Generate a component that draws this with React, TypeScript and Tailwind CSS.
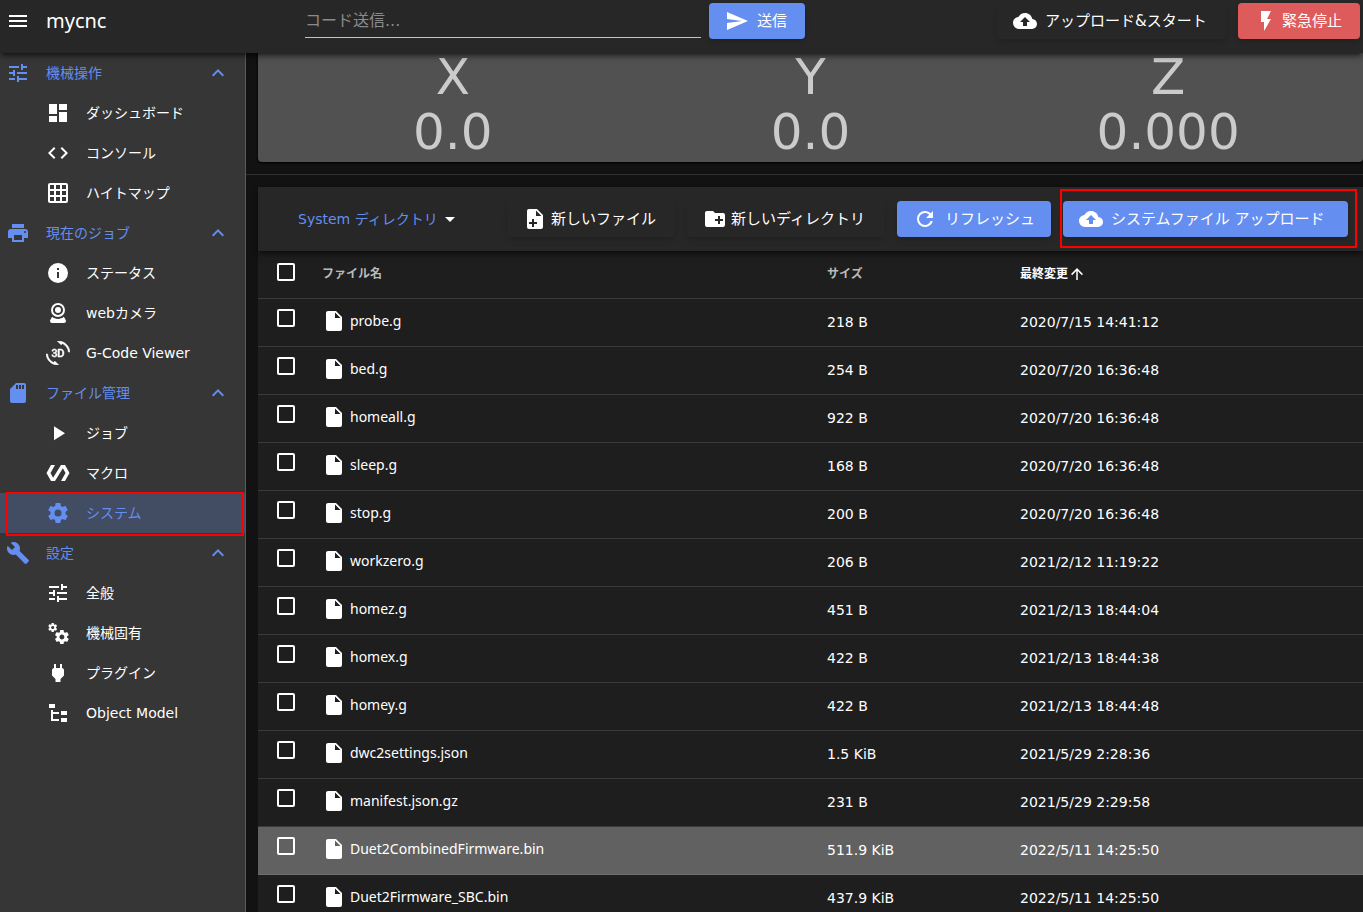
import { useState } from 'react';
import { Md3dRotation } from 'react-icons/md';
import clsx from 'clsx';

const icons = {
  menu: 'M3,6H21V8H3V6M3,11H21V13H3V11M3,16H21V18H3V16Z',
  send: 'M2,21L23,12L2,3V10L17,12L2,14V21Z',
  cloudUpload:
    'M14,13V17H10V13H7L12,8L17,13M19.35,10.03C18.67,6.59 15.64,4 12,4C9.11,4 6.6,5.64 5.35,8.03C2.34,8.36 0,10.9 0,14A6,6 0 0,0 6,20H19A5,5 0 0,0 24,15C24,12.36 21.95,10.22 19.35,10.03Z',
  flash: 'M7,2V13H10V22L17,10H13L17,2H7Z',
  tune: 'M3,17V19H9V17H3M3,5V7H13V5H3M13,21V19H21V17H13V15H11V21H13M7,9V11H3V13H7V15H9V9H7M21,13V11H11V13H21M15,9H17V7H21V5H17V3H15V9Z',
  dashboard: 'M13,3V9H21V3M13,21H21V11H13M3,21H11V15H3M3,13H11V3H3V13Z',
  code: 'M14.6,16.6L19.2,12L14.6,7.4L16,6L22,12L16,18L14.6,16.6M9.4,16.6L4.8,12L9.4,7.4L8,6L2,12L8,18L9.4,16.6Z',
  grid: 'M10,4V8H14V4H10M16,4V8H20V4H16M16,10V14H20V10H16M16,16V20H20V16H16M14,20V16H10V20H14M8,20V16H4V20H8M8,14V10H4V14H8M8,8V4H4V8H8M10,14H14V10H10V14M4,2H20A2,2 0 0,1 22,4V20A2,2 0 0,1 20,22H4C2.92,22 2,21.1 2,20V4A2,2 0 0,1 4,2Z',
  printer:
    'M18,3H6V7H18M19,12A1,1 0 0,1 18,11A1,1 0 0,1 19,10A1,1 0 0,1 20,11A1,1 0 0,1 19,12M16,19H8V14H16M19,8H5A3,3 0 0,0 2,11V17H6V21H18V17H22V11A3,3 0 0,0 19,8Z',
  info: 'M13,9H11V7H13M13,17H11V11H13M12,2A10,10 0 0,0 2,12A10,10 0 0,0 12,22A10,10 0 0,0 22,12A10,10 0 0,0 12,2Z',
  webcam:
    'M12,2A7,7 0 0,1 19,9A7,7 0 0,1 12,16A7,7 0 0,1 5,9A7,7 0 0,1 12,2M12,4A5,5 0 0,0 7,9A5,5 0 0,0 12,14A5,5 0 0,0 17,9A5,5 0 0,0 12,4M12,6A3,3 0 0,1 15,9A3,3 0 0,1 12,12A3,3 0 0,1 9,9A3,3 0 0,1 12,6M6,22A2,2 0 0,1 4,20C4,19.62 4.1,19.27 4.29,18.97L6.11,15.81C7.69,17.17 9.75,18 12,18C14.25,18 16.31,17.17 17.89,15.81L19.71,18.97C19.9,19.27 20,19.62 20,20A2,2 0 0,1 18,22H6Z',
  sdCard: 'M18,8H16V4H18M15,8H13V4H15M12,8H10V4H12M18,2H10L4,8V20A2,2 0 0,0 6,22H18A2,2 0 0,0 20,20V4A2,2 0 0,0 18,2Z',
  play: 'M8,5.14V19.14L19,12.14L8,5.14Z',
  polymer: 'M19,4H15L7.1,16.63L4.5,12L9,4H5L0.5,12L5,20H9L16.89,7.37L19.5,12L15,20H19L23.5,12L19,4Z',
  cog: 'M12,15.5A3.5,3.5 0 0,1 8.5,12A3.5,3.5 0 0,1 12,8.5A3.5,3.5 0 0,1 15.5,12A3.5,3.5 0 0,1 12,15.5M19.43,12.97C19.47,12.65 19.5,12.33 19.5,12C19.5,11.67 19.47,11.34 19.43,11L21.54,9.37C21.73,9.22 21.78,8.95 21.66,8.73L19.66,5.27C19.54,5.05 19.27,4.96 19.05,5.05L16.56,6.05C16.04,5.66 15.5,5.32 14.87,5.07L14.5,2.42C14.46,2.18 14.25,2 14,2H10C9.75,2 9.54,2.18 9.5,2.42L9.13,5.07C8.5,5.32 7.96,5.66 7.44,6.05L4.95,5.05C4.73,4.96 4.46,5.05 4.34,5.27L2.34,8.73C2.21,8.95 2.27,9.22 2.46,9.37L4.57,11C4.53,11.34 4.5,11.67 4.5,12C4.5,12.33 4.53,12.65 4.57,12.97L2.46,14.63C2.27,14.78 2.21,15.05 2.34,15.27L4.34,18.73C4.46,18.95 4.73,19.03 4.95,18.95L7.44,17.94C7.96,18.34 8.5,18.68 9.13,18.93L9.5,21.58C9.54,21.82 9.75,22 10,22H14C14.25,22 14.46,21.82 14.5,21.58L14.87,18.93C15.5,18.67 16.04,18.34 16.56,17.94L19.05,18.95C19.27,19.03 19.54,18.95 19.66,18.73L21.66,15.27C21.78,15.05 21.73,14.78 21.54,14.63L19.43,12.97Z',
  wrench:
    'M22.7,19L13.6,9.9C14.5,7.6 14,4.9 12.1,3C10.1,1 7.1,0.6 4.7,1.7L9,6L6,9L1.6,4.7C0.4,7.1 0.9,10.1 2.9,12.1C4.8,14 7.5,14.5 9.8,13.6L18.9,22.7C19.3,23.1 19.9,23.1 20.3,22.7L22.6,20.4C23.1,20 23.1,19.3 22.7,19Z',
  cogs: 'M15.9,18.45C17.25,18.45 18.35,17.35 18.35,16C18.35,14.65 17.25,13.55 15.9,13.55C14.54,13.55 13.45,14.65 13.45,16C13.45,17.35 14.54,18.45 15.9,18.45M21.1,16.68L22.58,17.84C22.71,17.95 22.75,18.13 22.66,18.29L21.26,20.71C21.17,20.86 21,20.92 20.83,20.86L19.09,20.16C18.73,20.44 18.33,20.67 17.91,20.85L17.64,22.7C17.62,22.87 17.47,23 17.3,23H14.5C14.32,23 14.18,22.87 14.15,22.7L13.89,20.85C13.46,20.67 13.07,20.44 12.71,20.16L10.96,20.86C10.81,20.92 10.62,20.86 10.54,20.71L9.14,18.29C9.05,18.13 9.09,17.95 9.22,17.84L10.7,16.68L10.65,16L10.7,15.31L9.22,14.16C9.09,14.05 9.05,13.86 9.14,13.71L10.54,11.29C10.62,11.13 10.81,11.07 10.96,11.13L12.71,11.84C13.07,11.56 13.46,11.32 13.89,11.15L14.15,9.29C14.18,9.13 14.32,9 14.5,9H17.3C17.47,9 17.62,9.13 17.64,9.29L17.91,11.15C18.33,11.32 18.73,11.56 19.09,11.84L20.83,11.13C21,11.07 21.17,11.13 21.26,11.29L22.66,13.71C22.75,13.86 22.71,14.05 22.58,14.16L21.1,15.31L21.15,16L21.1,16.68M6.69,8.07C7.56,8.07 8.26,7.37 8.26,6.5C8.26,5.63 7.56,4.92 6.69,4.92A1.58,1.58 0 0,0 5.11,6.5C5.11,7.37 5.82,8.07 6.69,8.07M10.03,6.94L11,7.68C11.07,7.75 11.09,7.87 11.03,7.97L10.13,9.53C10.08,9.63 9.96,9.67 9.86,9.63L8.74,9.18L8,9.62L7.81,10.81C7.79,10.92 7.7,11 7.59,11H5.79C5.67,11 5.58,10.92 5.56,10.81L5.4,9.62L4.64,9.18L3.52,9.63C3.41,9.67 3.3,9.63 3.24,9.53L2.34,7.97C2.28,7.87 2.31,7.75 2.39,7.68L3.34,6.94L3.31,6.5L3.34,6.06L2.39,5.32C2.31,5.25 2.28,5.13 2.34,5.03L3.24,3.47C3.3,3.37 3.41,3.33 3.52,3.37L4.63,3.82L5.4,3.38L5.56,2.19C5.58,2.08 5.67,2 5.79,2H7.59C7.7,2 7.79,2.08 7.81,2.19L8,3.38L8.74,3.82L9.86,3.37C9.96,3.33 10.08,3.37 10.13,3.47L11.03,5.03C11.09,5.13 11.07,5.25 11,5.32L10.03,6.06L10.06,6.5L10.03,6.94Z',
  plug: 'M16,7V3H14V7H10V3H8V7H8C7,7 6,8 6,9V14.5L9.5,18V21H14.5V18L18,14.5V9C18,8 17,7 16,7Z',
  fileTree: 'M3,3H9V7H3V3M15,10H21V14H15V10M15,17H21V21H15V17M13,13H7V18H13V20H7L5,20V9H7V11H13V13Z',
  chevronUp: 'M7.41,15.41L12,10.83L16.59,15.41L18,14L12,8L6,14L7.41,15.41Z',
  menuDown: 'M7,10L12,15L17,10H7Z',
  filePlus:
    'M13,9V3.5L18.5,9M6,2C4.89,2 4,2.89 4,4V20A2,2 0 0,0 6,22H18A2,2 0 0,0 20,20V8L14,2M11,15V12H9V15H6V17H9V20H11V17H14V15H11Z',
  folderPlus:
    'M10,4L12,6H20A2,2 0 0,1 22,8V18A2,2 0 0,1 20,20H4C2.89,20 2,19.1 2,18V6C2,4.89 2.89,4 4,4H10M15,9V12H12V14H15V17H17V14H20V12H17V9H15Z',
  refresh:
    'M17.65,6.35C16.2,4.9 14.21,4 12,4A8,8 0 0,0 4,12A8,8 0 0,0 12,20C15.73,20 18.84,17.45 19.73,14H17.65C16.83,16.33 14.61,18 12,18A6,6 0 0,1 6,12A6,6 0 0,1 12,6C13.66,6 15.14,6.69 16.22,7.78L13,11H20V4L17.65,6.35Z',
  file: 'M13,9V3.5L18.5,9M6,2C4.89,2 4,2.89 4,4V20A2,2 0 0,0 6,22H18A2,2 0 0,0 20,20V8L14,2H6Z',
  arrowUp: 'M13,20H11V8L5.5,13.5L4.08,12.08L12,4.16L19.92,12.08L18.5,13.5L13,8V20Z',
};

type IconName = keyof typeof icons;

const Icon = ({ name, className = 'size-6' }: { name: IconName; className?: string }) => (
  <svg viewBox="0 0 24 24" fill="currentColor" fillRule="evenodd" aria-hidden="true" className={clsx('shrink-0', className)}>
    <path d={icons[name]} />
  </svg>
);

interface NavItem {
  label: string;
  icon: IconName | 'rotate3d';
}

interface NavGroup {
  label: string;
  icon: IconName;
  items: NavItem[];
}

const navigation: NavGroup[] = [
  {
    label: '機械操作',
    icon: 'tune',
    items: [
      { label: 'ダッシュボード', icon: 'dashboard' },
      { label: 'コンソール', icon: 'code' },
      { label: 'ハイトマップ', icon: 'grid' },
    ],
  },
  {
    label: '現在のジョブ',
    icon: 'printer',
    items: [
      { label: 'ステータス', icon: 'info' },
      { label: 'webカメラ', icon: 'webcam' },
      { label: 'G-Code Viewer', icon: 'rotate3d' },
    ],
  },
  {
    label: 'ファイル管理',
    icon: 'sdCard',
    items: [
      { label: 'ジョブ', icon: 'play' },
      { label: 'マクロ', icon: 'polymer' },
      { label: 'システム', icon: 'cog' },
    ],
  },
  {
    label: '設定',
    icon: 'wrench',
    items: [
      { label: '全般', icon: 'tune' },
      { label: '機械固有', icon: 'cogs' },
      { label: 'プラグイン', icon: 'plug' },
      { label: 'Object Model', icon: 'fileTree' },
    ],
  },
];

const files = [
  { name: 'probe.g', size: '218 B', modified: '2020/7/15 14:41:12' },
  { name: 'bed.g', size: '254 B', modified: '2020/7/20 16:36:48' },
  { name: 'homeall.g', size: '922 B', modified: '2020/7/20 16:36:48' },
  { name: 'sleep.g', size: '168 B', modified: '2020/7/20 16:36:48' },
  { name: 'stop.g', size: '200 B', modified: '2020/7/20 16:36:48' },
  { name: 'workzero.g', size: '206 B', modified: '2021/2/12 11:19:22' },
  { name: 'homez.g', size: '451 B', modified: '2021/2/13 18:44:04' },
  { name: 'homex.g', size: '422 B', modified: '2021/2/13 18:44:38' },
  { name: 'homey.g', size: '422 B', modified: '2021/2/13 18:44:48' },
  { name: 'dwc2settings.json', size: '1.5 KiB', modified: '2021/5/29 2:28:36' },
  { name: 'manifest.json.gz', size: '231 B', modified: '2021/5/29 2:29:58' },
  { name: 'Duet2CombinedFirmware.bin', size: '511.9 KiB', modified: '2022/5/11 14:25:50' },
  { name: 'Duet2Firmware_SBC.bin', size: '437.9 KiB', modified: '2022/5/11 14:25:50' },
];

const axes = [
  { letter: 'X', value: '0.0' },
  { letter: 'Y', value: '0.0' },
  { letter: 'Z', value: '0.000' },
];

const buttonBase = 'flex h-9 shrink-0 items-center whitespace-nowrap rounded px-4 text-[15px] text-white shadow-md';

const checkboxClass =
  'block size-[18px] appearance-none rounded-xs border-2 border-white checked:bg-[#648ef0]';

const TopBar = () => (
  <header className="relative z-10 flex h-[53px] shrink-0 items-start bg-[#272727] pr-[3px] pt-[3px] shadow-md shadow-black/50">
    <div className="flex h-9 w-[305px] shrink-0 items-center gap-4 pl-[6px]">
      <button aria-label="メニュー">
        <Icon name="menu" />
      </button>
      <h1 className="font-['Noto_Sans',sans-serif] text-xl">mycnc</h1>
    </div>
    <form className="flex max-w-[500px] flex-1 items-start gap-2" onSubmit={(e) => e.preventDefault()}>
      <input
        type="text"
        aria-label="コード送信"
        placeholder="コード送信..."
        className="h-[35px] min-w-0 flex-1 border-b border-[#c3c3c3] bg-transparent text-base outline-none placeholder:text-[#8b8b8b]"
      />
      <button type="submit" className={clsx(buttonBase, 'min-w-24 gap-2 bg-[#648ef0]')}>
        <Icon name="send" />
        送信
      </button>
    </form>
    <div className="ml-auto flex gap-3">
      <button className={clsx(buttonBase, 'min-w-[229px] gap-2')}>
        <Icon name="cloudUpload" />
        アップロード&amp;スタート
      </button>
      <button className={clsx(buttonBase, 'min-w-[122px] gap-1 bg-[#de5b5b]')}>
        <Icon name="flash" />
        緊急停止
      </button>
    </div>
  </header>
);

const Sidebar = () => {
  const [active, setActive] = useState('システム');

  return (
    <nav className="w-[246px] shrink-0 border-r border-[#5a5a5a] bg-[#363636]">
      {navigation.map((group) => (
        <div key={group.label}>
          <button className="flex h-10 w-full items-center pl-[6px] pr-[15px] text-sm text-[#648ef0]">
            <Icon name={group.icon} />
            <span className="ml-4 flex-1 text-left">{group.label}</span>
            <Icon name="chevronUp" />
          </button>
          {group.items.map((item) => (
            <a
              key={item.label}
              href="#"
              onClick={() => setActive(item.label)}
              className={clsx(
                'relative flex h-10 items-center gap-4 pl-[46px] text-sm',
                item.label === active ? 'bg-[#424c63] text-[#648ef0]' : 'text-white'
              )}
            >
              {item.icon === 'rotate3d' ? (
                <Md3dRotation className="size-6 shrink-0 [&>path:not([fill=none])]:[stroke-width:0.6]" />
              ) : (
                <Icon name={item.icon} />
              )}
              <span>{item.label}</span>
              {item.label === active && (
                <span className="absolute -bottom-[3px] -top-px left-[6px] right-px border-2 border-[#ff0000]" />
              )}
            </a>
          ))}
        </div>
      ))}
    </nav>
  );
};

const AxisPositions = () => (
  <section className="-mt-[3px] ml-3 grid grid-cols-3 rounded-b bg-[#515151] px-4 pb-[2px] text-center text-[50px] leading-[55px] text-[#cbcbcb] shadow-sm shadow-black">
    {axes.map((axis) => (
      <div key={axis.letter}>
        <div>{axis.letter}</div>
        <div>{axis.value}</div>
      </div>
    ))}
  </section>
);

const FileToolbar = () => (
  <div className="relative flex h-16 items-center gap-3 bg-[#272727] pl-10 pr-[15px] shadow-md shadow-black/50">
    <button className="flex items-center whitespace-nowrap text-sm text-[#648ef0]">
      System ディレクトリ
      <Icon name="menuDown" className="size-6 text-white" />
    </button>
    <button className={clsx(buttonBase, 'ml-auto min-w-[168px] gap-1')}>
      <Icon name="filePlus" />
      新しいファイル
    </button>
    <button className={clsx(buttonBase, 'min-w-[198px] gap-1')}>
      <Icon name="folderPlus" />
      新しいディレクトリ
    </button>
    <button className={clsx(buttonBase, 'gap-2 bg-[#648ef0]')}>
      <Icon name="refresh" />
      リフレッシュ
    </button>
    <div className="relative">
      <button className={clsx(buttonBase, 'min-w-[285px] gap-2 bg-[#648ef0]')}>
        <Icon name="cloudUpload" />
        システムファイル アップロード
      </button>
      <span className="pointer-events-none absolute -bottom-[11px] -left-[3px] -right-[9px] -top-3 border-2 border-[#ff0000]" />
    </div>
  </div>
);

const FileTable = () => (
  <table className="w-full table-fixed text-left text-sm">
    <thead>
      <tr className="h-[47px] border-b border-[#3a3a3a] text-xs text-[#bababa]">
        <th className="w-12 pb-[5px] pl-[19px]">
          <input type="checkbox" aria-label="すべて選択" className={checkboxClass} />
        </th>
        <th className="px-4">ファイル名</th>
        <th className="w-[193px] px-4">サイズ</th>
        <th className="w-[359px] px-4 text-white">
          <span className="flex items-center">
            最終変更
            <Icon name="arrowUp" className="size-[18px]" />
          </span>
        </th>
      </tr>
    </thead>
    <tbody>
      {files.map((file) => (
        <tr
          key={file.name}
          className={clsx(
            'h-12 border-b',
            file.name === 'Duet2CombinedFirmware.bin' ? 'border-[#6e6e6e] bg-[#616161]' : 'border-[#3a3a3a]'
          )}
        >
          <td className="pb-2 pl-[19px]">
            <input type="checkbox" aria-label={file.name} className={checkboxClass} />
          </td>
          <td className="px-4 pb-[2px] font-['Noto_Sans',sans-serif]">
            <span className="flex items-center gap-1">
              <Icon name="file" />
              {file.name}
            </span>
          </td>
          <td className="px-4">{file.size}</td>
          <td className="px-4">{file.modified}</td>
        </tr>
      ))}
    </tbody>
  </table>
);

export default function App() {
  return (
    <div className="flex h-screen flex-col overflow-hidden bg-[#121212] font-['DejaVu_Sans','Noto_Sans_CJK_JP',sans-serif] text-white">
      <TopBar />
      <div className="flex min-h-0 flex-1">
        <Sidebar />
        <main className="min-w-0 flex-1 overflow-hidden">
          <AxisPositions />
          <hr className="my-3 border-[#2f2f2f]" />
          <section className="ml-3 bg-[#1e1e1e]">
            <FileToolbar />
            <FileTable />
          </section>
        </main>
      </div>
    </div>
  );
}
